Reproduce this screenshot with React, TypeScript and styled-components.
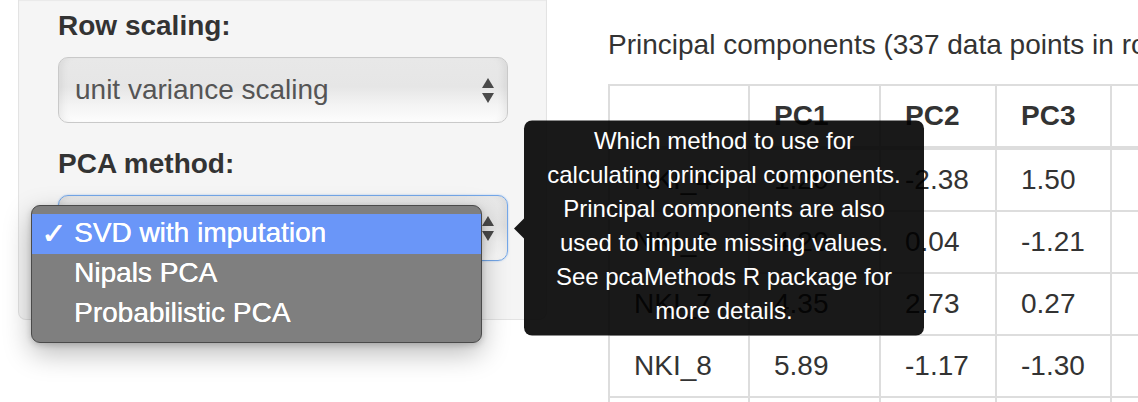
import React from 'react';
import styled, { createGlobalStyle } from 'styled-components';

const GlobalStyle = createGlobalStyle`
  html, body {
    margin: 0;
    background: #fff;
    overflow: hidden;
  }

  body {
    font-family: 'Liberation Sans', Arial, Helvetica, sans-serif;
    color: #333;
  }
`;

const Page = styled.div`
  display: flex;
  align-items: flex-start;
  width: 100%;
  height: 402px;
`;

const Sidebar = styled.aside`
  position: relative;
  z-index: 2;
  flex: none;
  width: 529px;
  margin-left: 18px;
  box-sizing: border-box;
  padding: 6px 38px 58px 39px;
  background: #f5f5f5;
  border: 1px solid #e3e3e3;
  border-top: none;
  border-radius: 0 0 8px 8px;
  box-shadow: inset 0 1px 1px rgba(0, 0, 0, 0.05);
`;

const FormGroup = styled.div`
  & + & {
    margin-top: 21px;
  }
`;

const Label = styled.label`
  display: block;
  margin-bottom: 11px;
  font-size: 28px;
  line-height: 40px;
  font-weight: bold;
  color: #333;
`;

const SelectBox = styled.div<{ $focused?: boolean }>`
  position: relative;
  display: flex;
  align-items: center;
  justify-content: space-between;
  height: 66px;
  box-sizing: border-box;
  padding: 0 13px 0 16px;
  border: 1px solid ${(p) => (p.$focused ? '#74a7e8' : '#c9c9c9')};
  border-radius: 10px;
  background: linear-gradient(to bottom, #e8e8e8 0%, #e6e6e6 45%, #f3f3f3 72%, #fdfdfd 100%);
  box-shadow: ${(p) =>
    p.$focused
      ? '0 0 2px rgba(102, 160, 233, 0.6), inset 8px 0 8px -6px rgba(0, 0, 0, 0.08), inset -8px 0 8px -6px rgba(0, 0, 0, 0.08)'
      : 'inset 8px 0 8px -6px rgba(0, 0, 0, 0.08), inset -8px 0 8px -6px rgba(0, 0, 0, 0.08)'};
  font-size: 28px;
  color: #555;
`;

const SelectValue = styled.span`
  white-space: nowrap;
`;

const Dropdown = styled.ul`
  position: absolute;
  left: -28px;
  top: 9px;
  z-index: 3;
  width: 451px;
  box-sizing: border-box;
  margin: 0;
  padding: 8px 0;
  list-style: none;
  background: #7f7f7f;
  border: 1px solid #4a4a4a;
  border-radius: 9px;
  box-shadow: 0 10px 28px rgba(0, 0, 0, 0.28), 0 2px 6px rgba(0, 0, 0, 0.18);
`;

const Option = styled.li<{ $active?: boolean }>`
  position: relative;
  height: 40px;
  box-sizing: border-box;
  padding: 0 0 0 42px;
  line-height: 37px;
  font-size: 28px;
  color: #fff;
  white-space: nowrap;
  text-shadow: 0.3px 0 0 #fff;
  background: ${(p) => (p.$active ? '#6a96f8' : 'transparent')};
`;

const Check = styled.span`
  position: absolute;
  left: 9px;
  top: 1px;
  font-family: 'DejaVu Sans', sans-serif;
  font-size: 30px;
  font-weight: bold;
  text-shadow: 0.8px 0 0 #fff;
`;

const Tooltip = styled.div`
  position: absolute;
  left: calc(100% + 17px);
  top: 50%;
  transform: translateY(-50%);
  z-index: 4;
  width: 400px;
  box-sizing: border-box;
  padding: 3px 16px 8px;
  background: rgba(0, 0, 0, 0.9);
  border-radius: 8px;
  color: #fff;
  font-size: 24px;
  line-height: 34px;
  text-align: center;
  white-space: nowrap;

  &::before {
    content: '';
    position: absolute;
    left: -10px;
    top: 50%;
    margin-top: -10px;
    border-style: solid;
    border-width: 10px 10px 10px 0;
    border-color: transparent rgba(0, 0, 0, 0.9) transparent transparent;
  }
`;

const Main = styled.main`
  flex: 1;
  min-width: 0;
  margin-left: 61px;
`;

const Title = styled.h4`
  margin: 0;
  padding-top: 25px;
  font-size: 28px;
  line-height: 40px;
  font-weight: normal;
  color: #333;
  white-space: nowrap;
`;

const Table = styled.table`
  margin-top: 19px;
  width: 619px;
  table-layout: fixed;
  border-collapse: separate;
  border-spacing: 0;
  border-top: 2px solid #ddd;
  border-left: 2px solid #ddd;
  font-size: 28px;
  line-height: 40px;
  color: #333;
`;

const HeadCell = styled.th<{ $w: number }>`
  width: ${(p) => p.$w}px;
  box-sizing: border-box;
  height: 64px;
  padding: 10px 8px 10px 24px;
  text-align: left;
  font-weight: bold;
  border-right: 2px solid #ddd;
  border-bottom: 4px solid #ddd;
  white-space: nowrap;
`;

const Cell = styled.td`
  height: 62px;
  box-sizing: border-box;
  padding: 10px 8px 10px 24px;
  border-right: 2px solid #ddd;
  border-bottom: 2px solid #ddd;
  white-space: nowrap;
  overflow: hidden;
`;

function UpDownArrows() {
  return (
    <svg width="12" height="25" viewBox="0 0 12 25" aria-hidden="true">
      <polygon points="6,0 12,10 0,10" fill="#4a4a4a" />
      <polygon points="0,15 12,15 6,25" fill="#4a4a4a" />
    </svg>
  );
}

// the fifth column is cut by the window edge, so its cells stay blank
const columns = [
  { label: '', width: 140 },
  { label: 'PC1', width: 131 },
  { label: 'PC2', width: 116 },
  { label: 'PC3', width: 115 },
  { label: '', width: 115 },
];

const rows = [
  ['NKI_4', '1.20', '-2.38', '1.50', ''],
  ['NKI_6', '4.20', '0.04', '-1.21', ''],
  ['NKI_7', '4.35', '2.73', '0.27', ''],
  ['NKI_8', '5.89', '-1.17', '-1.30', ''],
];

const methods = ['SVD with imputation', 'Nipals PCA', 'Probabilistic PCA'];

const App = () => {
  return (
    <>
      <GlobalStyle />
      <Page>
        <Sidebar>
          <FormGroup>
            <Label>Row scaling:</Label>
            <SelectBox>
              <SelectValue>unit variance scaling</SelectValue>
              <UpDownArrows />
            </SelectBox>
          </FormGroup>

          <FormGroup>
            <Label>PCA method:</Label>
            <SelectBox $focused>
              <SelectValue>SVD with imputation</SelectValue>
              <UpDownArrows />
              <Dropdown>
                {methods.map((m, i) => (
                  <Option key={m} $active={i === 0}>
                    {i === 0 && <Check>✓</Check>}
                    {m}
                  </Option>
                ))}
              </Dropdown>
              <Tooltip>
                Which method to use for
                <br />
                calculating principal components.
                <br />
                Principal components are also
                <br />
                used to impute missing values.
                <br />
                See pcaMethods R package for
                <br />
                more details.
              </Tooltip>
            </SelectBox>
          </FormGroup>
        </Sidebar>

        <Main>
          <Title>Principal components (337 data points in rows)</Title>
          <Table>
            <thead>
              <tr>
                {columns.map((c, i) => (
                  <HeadCell key={i} $w={c.width}>
                    {c.label}
                  </HeadCell>
                ))}
              </tr>
            </thead>
            <tbody>
              {rows.map((r) => (
                <tr key={r[0]}>
                  {r.map((v, i) => (
                    <Cell key={i}>{v}</Cell>
                  ))}
                </tr>
              ))}
              <tr>
                {columns.map((c, i) => (
                  <Cell key={i} />
                ))}
              </tr>
            </tbody>
          </Table>
        </Main>
      </Page>
    </>
  );
};

export default App;
